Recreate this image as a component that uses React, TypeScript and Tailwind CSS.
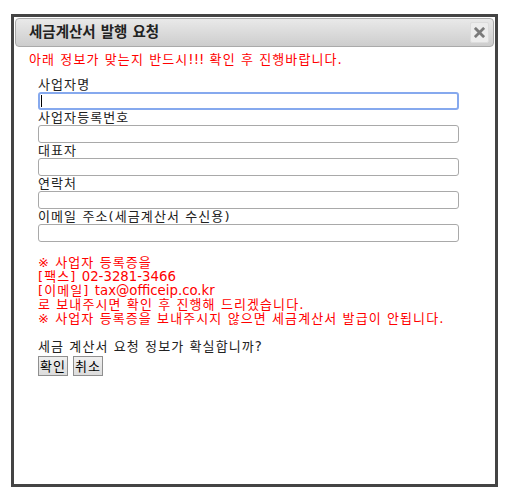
import React from 'react';

const FIELDS = ['사업자명', '사업자등록번호', '대표자', '연락처', '이메일 주소(세금계산서 수신용)'];

function CloseIcon() {
  return (
    <svg viewBox="0 0 12 12" className="w-[11px] h-[11px]">
      <path d="M2 2 L10 10 M10 2 L2 10" stroke="#7a7a7a" strokeWidth={3} strokeLinecap="square" fill="none" />
    </svg>
  );
}

// hangul gets a little tracking to match the wide gulim-style glyphs, latin stays plain
const Lat = ({ children }: { children: React.ReactNode }) => <span className="text-[13.3px] tracking-normal">{children}</span>;

const Line = ({ children }: { children: React.ReactNode }) => <div className="h-[14px] leading-[14px]">{children}</div>;

export default function App() {
  return (
    <div className="pl-[11px] pt-[14px] bg-white font-['DejaVu_Sans','Noto_Sans_CJK_KR',sans-serif] text-[13px] tracking-[1.1px] text-[#222]">
      <div className="w-[487px] h-[473px] border-[3px] border-[#444] bg-white p-px flex flex-col">
        {/* Title bar */}
        <div className="h-[29px] flex items-center justify-between pl-[13px] pr-[4px] rounded-[4px] border border-[#aaa] bg-gradient-to-b from-[#e9e9e9] to-[#cdcdcd]">
          <span className="text-[14.5px] tracking-normal font-bold text-[#222] leading-none">세금계산서 발행 요청</span>
          <button className="w-[19px] h-[21px] flex items-center justify-center rounded-[2px] bg-[#ececec] border border-[#dcdcdc]">
            <CloseIcon />
          </button>
        </div>

        {/* Body */}
        <div className="pl-[14px]">
          <div className="mt-[6px] text-[#ff0000]">
            <Line>아래 정보가 맞는지 반드시<Lat>!!!</Lat> 확인 후 진행바랍니다<Lat>.</Lat></Line>
          </div>

          <div className="pl-[9px] mt-[10px]">
            {FIELDS.map((label, i) => (
              <div key={label}>
                <div className="leading-[15px] h-[15px]">{label}</div>
                {i === 0 ? (
                  <div className="relative">
                    <input className="block w-[421px] h-[18px] rounded-[3px] border-2 border-[#86a9ee] outline-none bg-white" />
                    <div className="absolute left-[3px] top-[3px] w-px h-[12px] bg-black" />
                  </div>
                ) : (
                  <input className="block w-[421px] h-[18px] rounded-[3px] border border-[#a9a9a9] outline-none bg-white" />
                )}
              </div>
            ))}

            <div className="mt-[14px] text-[#ff0000]">
              <Line>※ 사업자 등록증을</Line>
              <Line>[팩스] <Lat>02-3281-3466</Lat></Line>
              <Line>[이메일] <Lat>tax@officeip.co.kr</Lat></Line>
              <Line>로 보내주시면 확인 후 진행해 드리겠습니다<Lat>.</Lat></Line>
              <Line>※ 사업자 등록증을 보내주시지 않으면 세금계산서 발급이 안됩니다<Lat>.</Lat></Line>
            </div>

            <div className="mt-[14px]">
              <Line>세금 계산서 요청 정보가 확실합니까<Lat>?</Lat></Line>
            </div>
            <div className="mt-[2px] flex gap-[5px]">
              <button className="w-[30px] h-[20px] px-0 leading-none tracking-[1px] border border-[#8f8f8f] bg-gradient-to-b from-[#f0f0f0] to-[#dcdcdc] text-black">확인</button>
              <button className="w-[30px] h-[20px] px-0 leading-none tracking-[1px] border border-[#8f8f8f] bg-gradient-to-b from-[#f0f0f0] to-[#dcdcdc] text-black">취소</button>
            </div>
          </div>
        </div>
      </div>
    </div>
  );
}
